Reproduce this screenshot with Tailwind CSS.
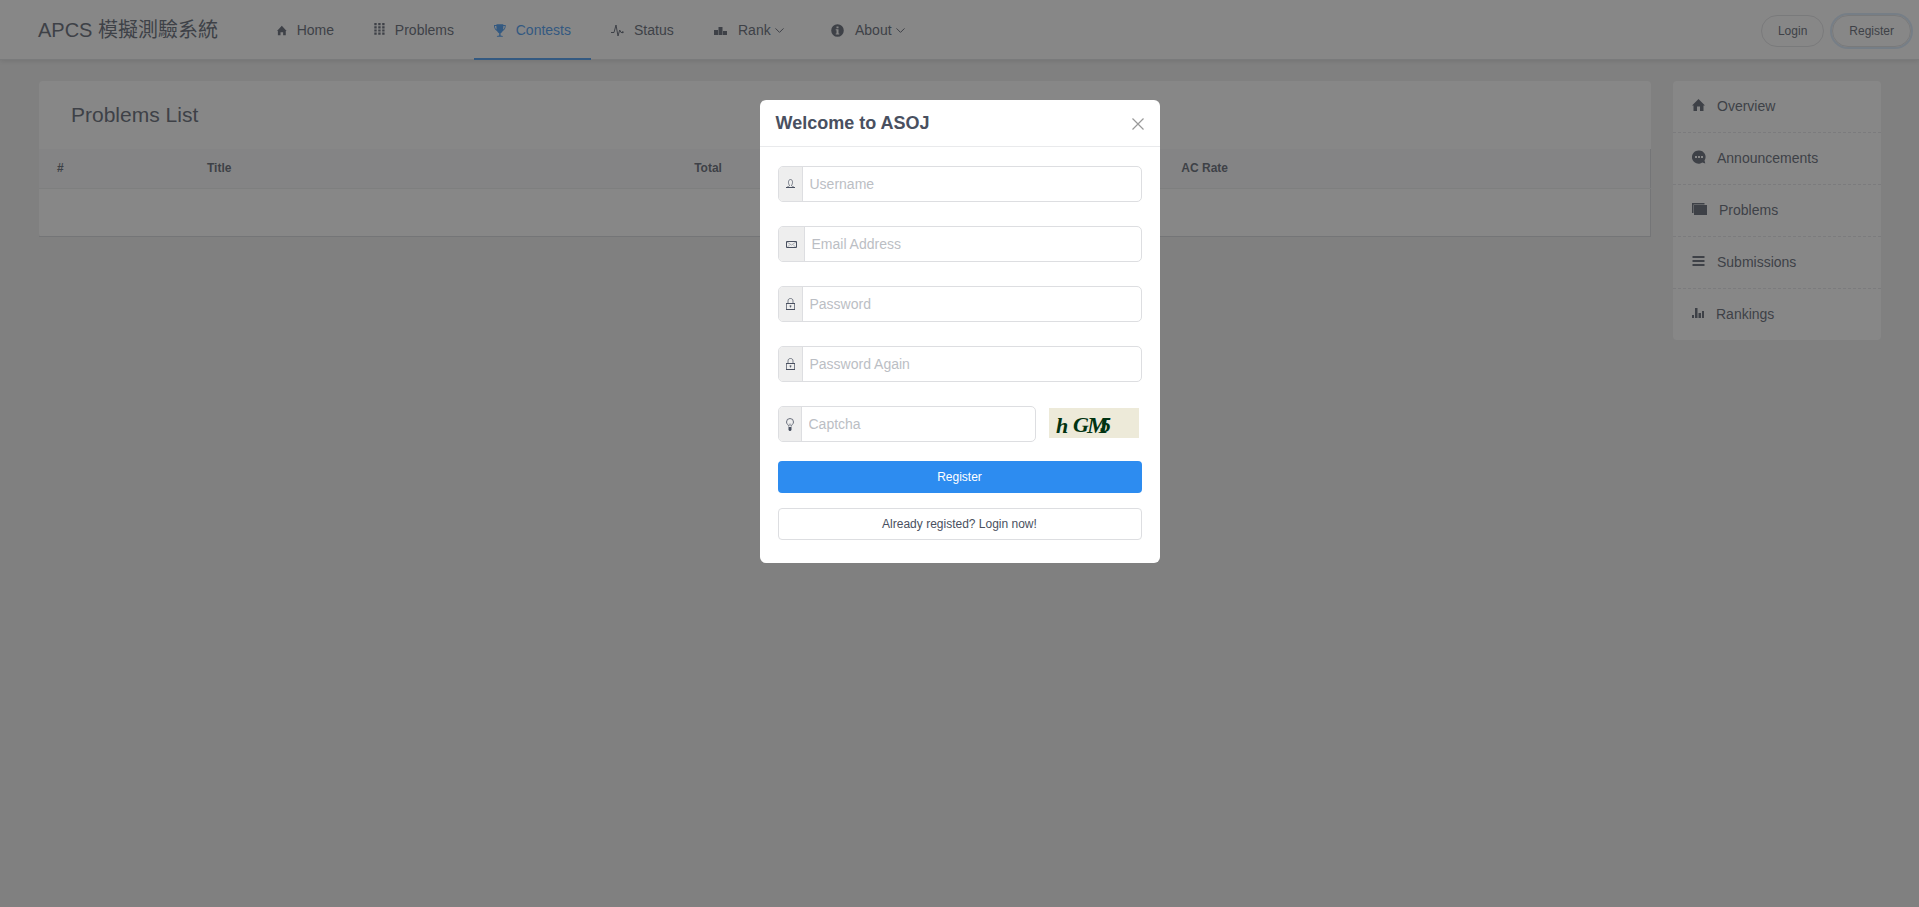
<!DOCTYPE html>
<html lang="zh-Hant">
<head>
<meta charset="utf-8">
<meta name="viewport" content="width=device-width, initial-scale=1">
<title>APCS 模擬測驗系統</title>
<script src="https://cdn.jsdelivr.net/npm/@tailwindcss/browser@4"></script>
</head>
<body class="min-h-screen bg-[#eee] font-['Liberation_Sans','Noto_Sans_CJK_TC',sans-serif] text-sm text-[#495060]">

<header class="flex h-[60px] items-stretch border-b border-[#dddee1] bg-white pl-[38px] pr-2 shadow-[0_1px_5px_rgba(0,0,0,0.15)]">
  <a href="#" class="flex w-[219px] items-center text-xl">APCS 模擬測驗系統</a>
  <nav class="-mb-px flex flex-1 items-stretch">
    <a href="#" class="flex w-[97px] items-center px-5"><svg class="mr-[10px] h-[11px] w-[11px]" viewBox="0 0 11 11" fill="currentColor"><path d="M5.500 0 11 6H10v5H7V7.500H4V11H1V6H0z"/></svg>Home</a>
    <a href="#" class="flex w-[120px] items-center px-5"><svg class="mr-[10px] h-3 w-[11px] -translate-y-px" viewBox="0 0 11 12" fill="currentColor"><path d="M.3 0h2.400v2.200H.3zM4.300 0h2.400v2.200H4.300zM8.300 0h2.400v2.200H8.300zM.3 3.200h2.400v2.200H.3zM4.300 3.200h2.400v2.200H4.300zM8.300 3.200h2.400v2.200H8.300zM.3 6.400h2.400v2.200H.3zM4.300 6.400h2.400v2.200H4.300zM8.300 6.400h2.400v2.200H8.300zM.3 9.600h2.400v2.200H.3zM4.300 9.600h2.400v2.200H4.300zM8.300 9.600h2.400v2.200H8.300z"/></svg>Problems</a>
    <a href="#" aria-current="page" class="flex w-[117px] items-center border-b-2 border-[#2d8cf0] px-5 pt-[2px] text-[#2d8cf0]"><svg class="mr-[10px] h-[13px] w-[12px]" viewBox="0 0 12 13" fill="currentColor"><path d="M2.500 0h7v1H12c0 3.500-1 5-3 6C8.300 8.200 7.300 9 6.700 9.200V11.500L9 12v1H3v-1l2.300-.5V9.200C4.700 9 3.700 8.200 3 7 1 6 0 4.500 0 1h2.500zM1 2c.1 1.900.6 3 1.600 3.600L2.400 2zM11 2H9.600l-.2 3.600C10.400 5 10.900 3.900 11 2z"/></svg>Contests</a>
    <a href="#" class="flex w-[103px] items-center px-5"><svg class="mr-[10px] h-[13px] w-[13px]" viewBox="0 0 13 13" fill="none" stroke="currentColor" stroke-linejoin="round"><path d="M0 8.500h3L5 1l2 11 1.700-6L10 8.500h1"/><circle cx="11.700" cy="8.300" r="1" fill="currentColor" stroke="none"/></svg>Status</a>
    <a href="#" class="flex w-[117px] items-center px-5"><svg class="mr-[11px] h-2 w-[13px] translate-y-px" viewBox="0 0 13 8" fill="currentColor"><path d="M0 3h4v5H0zM4.500 0h4v8h-4zM9 4h4v4H9z"/></svg>Rank<svg class="ml-1 h-[5px] w-[9px]" viewBox="0 0 9 5" fill="none" stroke="currentColor"><path d="M.5.4l4 4 4-4"/></svg></a>
    <a href="#" class="flex items-center px-5"><svg class="mr-[11px] h-[13px] w-[13px]" viewBox="0 0 13 13" fill="currentColor" fill-rule="evenodd"><path d="M6.500.2a6.300 6.300 0 1 1 0 12.600 6.300 6.300 0 0 1 0-12.600zM5.500 2.400v1.800h2V2.400zM4.700 5.200v1h.8v3.400h-.8v1h3.600v-1h-.8V5.200z"/></svg>About<svg class="ml-1 h-[5px] w-[9px]" viewBox="0 0 9 5" fill="none" stroke="currentColor"><path d="M.5.4l4 4 4-4"/></svg></a>
  </nav>
  <div class="flex items-center gap-2 pt-[2px] text-xs">
    <button type="button" class="h-8 rounded-full border border-[#dddee1] px-4">Login</button>
    <button type="button" class="h-8 rounded-full border border-[#dddee1] px-4 shadow-[0_0_0_2px_rgba(45,140,240,0.2)]">Register</button>
  </div>
</header>

<div class="flex items-start gap-[22px] pl-[39px] pr-[38px] pt-[21px]">
  <main class="min-w-0 flex-1 rounded bg-white">
    <h1 class="flex h-[68px] items-center px-8 text-[21px]">Problems List</h1>
    <table class="w-full table-fixed border-collapse border-b border-r border-[#d0d2d6] text-left text-xs">
      <thead>
        <tr class="h-[39px] border-b border-[#e9eaec] bg-[#f8f8f9]">
          <th scope="col" class="w-[150px] px-[18px]">#</th>
          <th scope="col" class="px-[18px]">Title</th>
          <th scope="col" class="px-[18px]">Total</th>
          <th scope="col" class="px-[18px]">AC Rate</th>
        </tr>
      </thead>
      <tbody><tr class="h-12"><td colspan="4"></td></tr></tbody>
    </table>
  </main>
  <aside class="w-[208px] rounded bg-white">
    <ul class="divide-y divide-dashed divide-[#e1e2e6]">
      <li><a href="#" class="flex h-[51px] items-center px-[19px] pb-[2px]"><svg class="mr-3 h-3 w-[13px] -translate-y-px" viewBox="0 0 13 12" fill="currentColor"><path d="M6.500 0 13 6.500h-1.500V12H8V7.500H5V12H1.500V6.500H0z"/></svg>Overview</a></li>
      <li><a href="#" class="flex h-[51px] items-center px-[19px] pb-[2px]"><svg class="mr-[11px] h-[14px] w-[14px] -translate-y-px" viewBox="0 0 14 14" fill="currentColor" fill-rule="evenodd"><path d="M7 .5a6.500 6.500 0 0 1 5.500 10l.8 3-3-1A6.600 6.600 0 1 1 7 .5zM3 6v2h2V6zM6 6v2h2V6zM9 6v2h2V6z"/></svg>Announcements</a></li>
      <li><a href="#" class="flex h-[51px] items-center px-[19px] pb-[2px]"><svg class="mr-3 h-3 w-[15px] -translate-y-px" viewBox="0 0 15 12" fill="currentColor"><path d="M0 0h12.500v1.500H1.500V10H0zM2 2h13v10H2z"/></svg>Problems</a></li>
      <li><a href="#" class="flex h-[51px] items-center px-[19px] pb-[2px]"><svg class="mr-3 h-[10px] w-[13px] -translate-y-px" viewBox="0 0 13 10" fill="currentColor"><path d="M.5 0h12v2H.5zM.5 4h12v2H.5zM.5 8h12v2H.5z"/></svg>Submissions</a></li>
      <li><a href="#" class="flex h-[51px] items-center px-[19px] pb-[2px]"><svg class="mr-3 h-[10px] w-3 -translate-y-px" viewBox="0 0 12 10" fill="currentColor"><path d="M0 7h2v3H0zM3 0h2.500v10H3zM6.500 5H9v5H6.500zM10 3h2v7h-2z"/></svg>Rankings</a></li>
    </ul>
  </aside>
</div>

<div class="fixed inset-0 flex items-start justify-center bg-[#373737]/60 pt-[100px]">
  <section role="dialog" aria-modal="true" aria-labelledby="dialog-title" class="w-[400px] rounded-md bg-white">
    <div class="flex h-[47px] items-center justify-between border-b border-[#e9eaec] px-4">
      <h2 id="dialog-title" class="text-lg font-bold">Welcome to ASOJ</h2>
      <button type="button" aria-label="Close" class="pt-[2px] text-[#999]"><svg class="h-3 w-3" viewBox="0 0 12 12" fill="none" stroke="currentColor" stroke-width="1.200"><path d="M.5.5l11 11M11.500.5l-11 11"/></svg></button>
    </div>
    <form class="flex flex-col px-[18px] pb-[23px] pt-[19px]">
      <div class="flex flex-col gap-6">
        <div class="flex h-9 overflow-hidden rounded-[5px] border border-[#dddee1]">
          <label for="username" aria-label="Username" class="flex items-center border-r border-[#dddee1] bg-[#eee] px-[7px]"><svg class="h-[10px] w-[9px]" viewBox="0 0 9 10" fill="none" stroke="currentColor"><path d="M3.500 6.500C2 4.500 2 .5 4.500.5S7 4.500 5.500 6.500" stroke-width=".7"/><path d="M3.500 6.300c0 1-.5 1-2.500 1.700M5.500 6.300c0 1 .5 1 2.500 1.700" stroke-width=".6"/><path d="M0 8.500h9"/></svg></label>
          <input id="username" type="text" placeholder="Username" class="min-w-0 flex-1 px-[7px] outline-none placeholder:text-[#bbbec4]">
        </div>
        <div class="flex h-9 overflow-hidden rounded-[5px] border border-[#dddee1]">
          <label for="email" aria-label="Email Address" class="flex items-center border-r border-[#dddee1] bg-[#eee] px-[7px]"><svg class="h-2 w-[11px]" viewBox="0 0 11 8" fill="none" stroke="currentColor"><path d="M.5 1.500h10v6H.5z"/><path d="M1 2l4.500 3L10 2M1.500 7 4 4.500M9.500 7 7 4.500" stroke-width=".4"/></svg></label>
          <input id="email" type="email" placeholder="Email Address" class="min-w-0 flex-1 px-[7px] outline-none placeholder:text-[#bbbec4]">
        </div>
        <div class="flex h-9 overflow-hidden rounded-[5px] border border-[#dddee1]">
          <label for="password" aria-label="Password" class="flex items-center border-r border-[#dddee1] bg-[#eee] px-[7px]"><svg class="h-3 w-[9px]" viewBox="0 0 9 12" fill="none" stroke="currentColor"><path d="M0 5.500h9M0 11.500h9"/><path d="M.5 5.500v6M8.500 5.500v6" stroke-width=".7"/><path d="M2 5V3C2 1.300 3 .5 4.500.5S7 1.300 7 3v2" stroke-width=".7"/><path d="M4.500 7.500v2M3.500 8h2" stroke-width=".8"/></svg></label>
          <input id="password" type="password" placeholder="Password" class="min-w-0 flex-1 px-[7px] outline-none placeholder:text-[#bbbec4]">
        </div>
        <div class="flex h-9 overflow-hidden rounded-[5px] border border-[#dddee1]">
          <label for="password-again" aria-label="Password Again" class="flex items-center border-r border-[#dddee1] bg-[#eee] px-[7px]"><svg class="h-3 w-[9px]" viewBox="0 0 9 12" fill="none" stroke="currentColor"><path d="M0 5.500h9M0 11.500h9"/><path d="M.5 5.500v6M8.500 5.500v6" stroke-width=".7"/><path d="M2 5V3C2 1.300 3 .5 4.500.5S7 1.300 7 3v2" stroke-width=".7"/><path d="M4.500 7.500v2M3.500 8h2" stroke-width=".8"/></svg></label>
          <input id="password-again" type="password" placeholder="Password Again" class="min-w-0 flex-1 px-[7px] outline-none placeholder:text-[#bbbec4]">
        </div>
        <div class="flex items-start gap-[13px] pr-[3px]">
          <div class="flex h-9 min-w-0 flex-1 overflow-hidden rounded-[5px] border border-[#dddee1]">
            <label for="captcha" aria-label="Captcha" class="flex items-center border-r border-[#dddee1] bg-[#eee] px-[7px]"><svg class="h-[13px] w-2" viewBox="0 0 8 13" fill="none" stroke="currentColor"><path d="M2.700 8.500C2.700 6.500.5 6.300.5 4a3.500 3.500 0 0 1 7 0c0 2.300-2.200 2.500-2.200 4.500" stroke-width=".8"/><path d="M3.300 5.500 4 8l.7-2.500" stroke-width=".4"/><path d="M2.500 9h3v3l-1 1h-1l-1-1z" fill="currentColor" stroke="none"/></svg></label>
            <input id="captcha" type="text" placeholder="Captcha" class="min-w-0 flex-1 px-[7px] outline-none placeholder:text-[#bbbec4]">
          </div>
          <svg role="img" aria-label="Captcha image" class="mt-[2px] h-[30px] w-[90px] bg-[#edead9] font-['Liberation_Serif',serif] text-[22px] font-bold italic" viewBox="0 0 90 30" fill="#003311"><text x="7" y="25">h</text><text x="24" y="24">G</text><text x="38" y="25" class="text-[24px]">M</text><text x="51" y="24">5</text></svg>
        </div>
      </div>
      <button type="submit" class="mt-[19px] h-8 rounded bg-[#2d8cf0] text-xs text-white">Register</button>
      <button type="button" class="mt-[15px] h-8 rounded border border-[#dddee1] text-xs">Already registed? Login now!</button>
    </form>
  </section>
</div>
</body>
</html>
